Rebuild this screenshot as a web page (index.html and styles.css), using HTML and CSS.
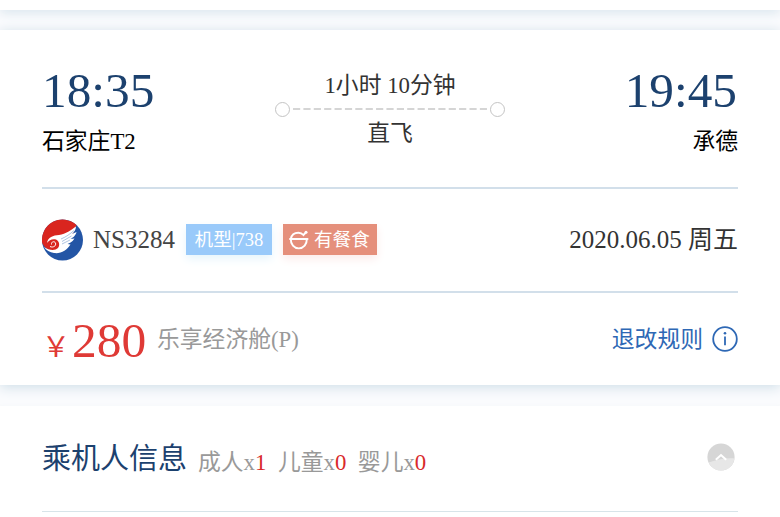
FILE: index.html
```
<!DOCTYPE html>
<html lang="zh-CN">
<head>
<meta charset="utf-8">
<title>航班信息</title>
<link rel="stylesheet" href="styles.css">
</head>
<body>
<div class="strip"></div>
<main class="card">
  <section class="route">
    <div class="stop">
      <div class="time">18:35</div>
      <div class="place">石家庄T2</div>
    </div>
    <div class="leg">
      <div class="duration">1小时 10分钟</div>
      <div class="track"><i class="dot"></i><svg class="dash" width="194" height="2" viewBox="0 0 194 2"><path d="M0 1H194" stroke="#c8c8c8" stroke-width="1.5" stroke-dasharray="7.2 3.18"/></svg><i class="dot"></i></div>
      <div class="direct">直飞</div>
    </div>
    <div class="stop stop-end">
      <div class="time">19:45</div>
      <div class="place">承德</div>
    </div>
  </section>
  <section class="flight">
    <svg class="logo" width="42" height="42" viewBox="0 0 42 42">
      <circle cx="20.5" cy="21" r="20.5" fill="#2355a5"/>
      <path d="M0.2 24A20.5 20.5 0 0 1 34.5 6L31 14L16 30C9 34 3 30 0.2 24Z" fill="#d9251f"/>
      <path d="M5 24C6 18 11 16.5 17 16C24 15 29 11 34 7.5C34 11 32 13 30 15L34.5 13C33.5 17 31 18.5 28.5 20L32.5 19.5C30.5 23 27.5 24 25.5 25L28.5 25.5C25 31 19 35 12 34C8 33.500 4 31 2 28C7 31.500 13 32 16 29C18 27 17.500 22 14 20.500C10.500 19.500 7 21 5 24Z" fill="#fff"/>
      <path d="M19 20C24 18 28 15 32 11.5M20 22.5L29.5 17M20 25L28 21" fill="none" stroke="#8dabd2" stroke-width=".7"/>
      <path d="M9.500 25.500C9 22.500 12.500 21.800 13.500 24C14.500 27 11 29 8 27.500" fill="none" stroke="#fff" stroke-width="1"/>
    </svg>
    <span class="number">NS3284</span>
    <span class="tag tag-plane">机型|738</span>
    <span class="tag tag-meal">
      <svg width="20" height="20" viewBox="0 0 20 20" fill="none" stroke="#fff" stroke-width="1.9" stroke-linecap="round"><path d="M1 9H18.6M17.8 9C18 14.4 14.6 18.4 9.8 18.4S1.6 14.4 1.8 9C2.6 4.8 6 2.8 9.4 2.8C11.6 2.8 13.2 3.6 14.4 5L16.8 2.6"/><circle cx="17" cy="2.3" r="1.5" fill="#fff" stroke="none"/></svg>
      <span>有餐食</span>
    </span>
    <span class="date">2020.06.05 周五</span>
  </section>
  <section class="fare">
    <span class="currency">￥</span><span class="price">280</span>
    <span class="cabin">乐享经济舱(P)</span>
    <span class="rules">退改规则</span>
    <svg class="info" width="26" height="26" viewBox="0 0 26 26" fill="none" stroke="#2e68b5" stroke-width="1.8"><circle cx="13" cy="13" r="11.8"/><path d="M13 10.6V19.3"/><circle cx="13" cy="7.2" r="1.3" fill="#2e68b5" stroke="none"/></svg>
  </section>
</main>
<section class="card passengers">
  <header class="passenger-head">
    <h2>乘机人信息</h2>
    <div class="counts"><span>成人x<b>1</b></span><span>儿童x<b>0</b></span><span>婴儿x<b>0</b></span></div>
    <svg class="collapse" width="28" height="28" viewBox="0 0 28 28"><circle cx="14" cy="14" r="13.6" fill="#d6d6d6"/><path d="M1.6 19.6C9 17 19 14.5 27.5 15.5A13.6 13.6 0 0 1 1.6 19.6Z" fill="#e7e7e7"/><path d="M8.8 16.8L14 12L19.2 16.8" fill="none" stroke="#fff" stroke-width="2"/></svg>
  </header>
</section>
</body>
</html>
```
FILE: styles.css
```
* { box-sizing: border-box; }
body {
  margin: 0;
  height: 517px;
  overflow: hidden;
  background: #fafbfd;
  font-family: "Liberation Serif", "Noto Sans CJK SC", serif;
  font-size: 22.8px;
  color: #333;
}
.strip { height: 10px; background: #fff; box-shadow: 0 2px 12px #d3e1ea; }
.card { margin-top: 20px; padding: 0 42px; background: #fff; }
main.card { height: 355px; box-shadow: 0 2px 12px #cddde7; }
.route {
  height: 159px;
  padding-top: 31px;
  display: flex;
  justify-content: space-between;
  border-bottom: 2px solid #d2dfea;
}
.stop { width: 200px; }
.stop-end { text-align: right; }
.time { height: 58px; line-height: 59px; font-size: 49.3px; color: #1c416e; }
.stop-end .time { padding-right: 1px; }
.place { height: 44px; line-height: 46px; color: #000; }
.leg { width: 230px; display: flex; flex-direction: column; align-items: center; }
.duration { height: 40px; line-height: 49px; white-space: nowrap; }
.track { height: 16px; display: flex; align-items: center; gap: 2px; }
.dash { margin: 0 1px; }
.dot { width: 15px; height: 15px; border: 1.5px solid #c4c4c4; border-radius: 50%; }
.direct { height: 36px; line-height: 33px; }
.flight { height: 104px; display: flex; align-items: center; border-bottom: 2px solid #d2dfea; }
.logo { margin-right: 9px; }
.number { width: 84px; margin-right: 9px; font-size: 25px; line-height: 36px; color: #444; }
.tag {
  height: 31px;
  margin-bottom: 1px;
  display: flex;
  align-items: center;
  color: #fff;
  font-size: 18.6px;
  line-height: 31px;
  white-space: nowrap;
}
.tag-plane { width: 86px; justify-content: center; background: #99cafa; box-shadow: 0 4px 10px #e6f5fc; }
.tag-meal { width: 94px; margin-left: 11px; padding-left: 6px; gap: 5px; background: #e58f7b; box-shadow: 0 4px 10px #fbebea; }
.date { margin-left: auto; font-size: 25px; line-height: 36px; }
.fare { height: 92px; display: flex; align-items: center; }
.currency { width: 30px; font-size: 28px; line-height: 40px; padding-top: 17px; color: #df3a36; }
.price { width: 75px; margin-right: 10px; font-size: 49.5px; line-height: 58px; padding-top: 3px; color: #df3a36; }
.cabin { padding-bottom: 4px; color: #999; }
.rules { margin-left: auto; margin-right: 9px; padding-bottom: 4px; color: #2e68b5; }
.passengers { margin-top: 21px; height: 111px; box-shadow: 0 0 4px #f5f7f9; }
.passenger-head { height: 106px; display: flex; align-items: center; border-bottom: 1px solid #d8e4e9; }
h2 { margin: 0 11px 0 0; font-size: 29px; font-weight: 400; line-height: 40px; color: #1c416e; }
.counts { display: flex; gap: 11.5px; padding-top: 3px; color: #999; }
.counts b { font-weight: 400; color: #d92a2b; }
.collapse { margin: 0 3px 3px auto; }
```
